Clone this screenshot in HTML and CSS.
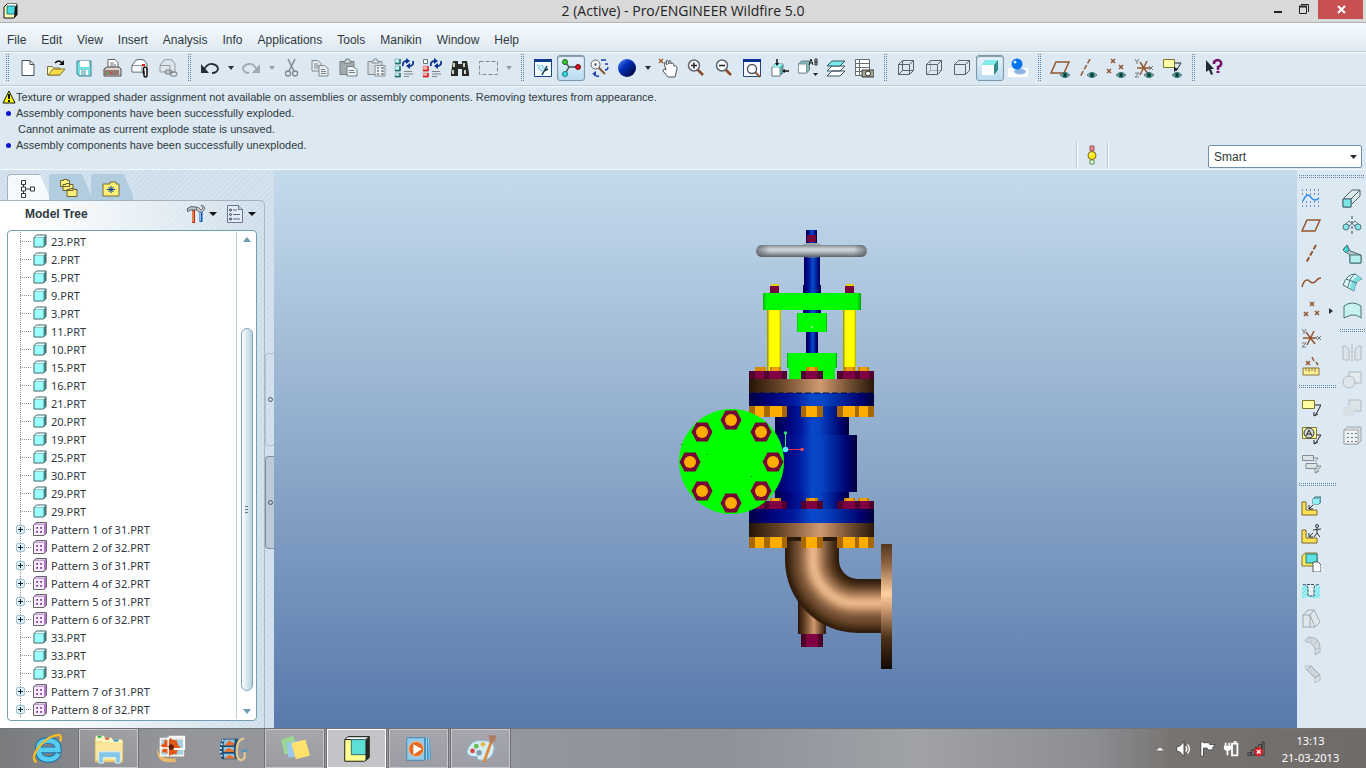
FILE: index.html
```html
<!DOCTYPE html>
<html lang="en">
<head>
<meta charset="utf-8">
<title>2 (Active) - Pro/ENGINEER Wildfire 5.0</title>
<link rel="stylesheet" href="styles.css">
</head>
<body>
<svg class="defs" aria-hidden="true">
  <defs>
    <symbol id="part" viewBox="0 0 14 14"><path d="M1 3.500 3.500 1H13v9.500L10.500 13H1z" fill="#458b8b" stroke="#3c5c60"/><path d="M1.500 3.500 3.500 1.500h9l-2 2z" fill="#e8ffff"/><path d="M1.500 4h9v8.500h-9z" fill="#9ff"/></symbol>
    <symbol id="pattern" viewBox="0 0 14 14"><path d="M.5 3 3 .5h10.500V11L11 13.500H.5z" fill="#b573c9" stroke="#666"/><path d="M1 3h10v10H1z" fill="#f8edff"/><path d="M1.500 2.500 3.500 1H13l-2 1.500z" fill="#dec3ea"/><path d="M3 5h2v2H3zM7 5h2v2H7zM3 9h2v2H3zM7 9h2v2H7z" fill="#a56cbd"/><path d="M4 5h1v1H4zM8 5h1v1H8zM4 9h1v1H4zM8 9h1v1H8z" fill="#6f2f8c"/></symbol>
    <symbol id="eye" viewBox="0 0 10 6"><path d="M0 3Q5-2 10 3 5 8 0 3z" fill="#9db9b9" stroke="#536d70"/><circle cx="5" cy="3" r="2.500" fill="#006b5b"/><circle cx="5" cy="3" r="1" fill="#012"/></symbol>
    <symbol id="lens" viewBox="0 0 20 20"><path d="m11 11 6 6" stroke="#8c4a22" stroke-width="2.500"/><circle cx="8" cy="7.500" r="5.500" fill="#f7fbff" stroke="#60666c" stroke-width="1.500"/></symbol>
    <symbol id="regen" viewBox="0 0 20 20"><path d="M9 8Q8 3 13 3M19 3q1 5-4 5" fill="none" stroke="#0a3292" stroke-width="1.800"/><path d="m12 0 4 3-4 3zM16 11l-4-3 4-3z" fill="#0a3292"/><path d="M10 13.500h8M10 16h9M10 18.500h5" stroke="#7f8789"/></symbol>
    <linearGradient id="orb" x1="0" x2="1" y2="1"><stop stop-color="#5b8eff"/><stop offset=".4" stop-color="#002db5"/><stop offset="1" stop-color="#000022"/></linearGradient>
  </defs>
</svg>

<header class="titlebar">
  <svg class="appicon" viewBox="0 0 16 16"><path d="M2 4 5 1h10v11l-3 3H2z" fill="#ffffb0" stroke="#111"/><path d="M5 1h10v11l-3 2z" fill="#fff"/><path d="M5 3h8v8H5z" fill="#48dce0" stroke="#26767c"/><path d="m13 4 2-3v11l-3 3z" fill="#111"/></svg>
  <h1 class="title">2 (Active) - Pro/ENGINEER Wildfire 5.0</h1>
  <div class="wincontrols">
    <button class="winbtn" aria-label="Minimize"><svg viewBox="0 0 20 20"><path d="M6 12h8" stroke="#222" stroke-width="2"/></svg></button>
    <button class="winbtn" aria-label="Restore"><svg viewBox="0 0 20 20"><path d="M5.500 6.500h7v7h-7zM7 4.500h7.500V12" fill="none" stroke="#222"/><path d="M5 6.500h8" stroke="#222" stroke-width="2"/></svg></button>
    <button class="winbtn close" aria-label="Close"><svg viewBox="0 0 20 20"><path d="m7 6 7 7m0-7-7 7" stroke="#fff" stroke-width="2"/></svg></button>
  </div>
</header>

<nav class="menubar">
  <button>File</button><button>Edit</button><button>View</button><button>Insert</button><button>Analysis</button><button>Info</button><button>Applications</button><button>Tools</button><button>Manikin</button><button>Window</button><button>Help</button>
</nav>

<div class="toolbar">
  <span class="grip"></span>
  <button class="tool" aria-label="New"><svg viewBox="0 0 20 20"><path d="M4 2.500h8l4 4v11H4z" fill="#fff" stroke="#4b5258"/><path d="M12 2.500v4h4" fill="none" stroke="#4b5258"/></svg></button>
  <button class="tool" aria-label="Open"><svg viewBox="0 0 20 20"><path d="M1.500 17V8.500h5l1 1.500h6v7z" fill="#fffdb4" stroke="#80713b"/><path d="m2 17 5-6h12l-5 6z" fill="#f7dc4c" stroke="#87732f"/><path d="M9 5q4-4 7 0" fill="none" stroke="#111" stroke-width="1.500"/><path d="M18 2v5h-5z" fill="#111"/></svg></button>
  <button class="tool" aria-label="Save"><svg viewBox="0 0 20 20"><path d="M3 3h14v15H5l-2-2z" fill="#72dfe3" stroke="#49818b"/><path d="M6 3h9v6H6zM6 12h8v5H6z" fill="#fff"/><path d="M7 12h5v5H7z" fill="#9cc9d4"/></svg></button>
  <button class="tool" aria-label="Print"><svg viewBox="0 0 20 20"><path d="M6 10V1.500h7l3 3V11" fill="#fff" stroke="#5b6265"/><path d="M8 5h4M8 7h6M8 9h6" stroke="#778"/><path d="m2 11 3-2h12l2 2v7H2z" fill="#ddd3ce" stroke="#434749"/><path d="M2 12h15v5H2z" fill="#95786f"/><path d="M4 15h3" stroke="#2c4"/><path d="M8 15h2" stroke="#f22"/></svg></button>
  <button class="tool" aria-label="Send"><svg viewBox="0 0 20 20"><path d="M2 7.500 6 2q4-1 8 0l3 4v8H2z" fill="#fff" stroke="#596167"/><path d="M2 7.500h10V14H2z" fill="#f5fafc" stroke="#88949b"/><path d="M12 6h3v2h-3z" fill="#e11"/><path d="M13.500 16v-5q0-2 1.500-2t2 2v6q0 2-1.500 2T14 17v-4" fill="#fff" stroke="#111" stroke-width="1.500"/></svg></button>
  <button class="tool" aria-label="Send as link"><svg viewBox="0 0 20 20"><path d="M2 7.500 6 2q4-1 8 0l3 4v8H2zM2 7.500h10V14" fill="#e0e7ec" stroke="#949ca4"/><rect x="7" y="12" width="7" height="4" rx="2" fill="none" stroke="#777"/><rect x="12" y="14" width="7" height="4" rx="2" fill="none" stroke="#777"/></svg></button>
  <span class="grip"></span>
  <button class="tool" aria-label="Undo"><svg viewBox="0 0 20 20"><path d="M4 12Q7 5.500 12 6q6 1 6 5-1 4-6 4" fill="none" stroke="#252e35" stroke-width="1.800"/><path d="M1 6v9h8z" fill="#252e35"/></svg></button>
  <button class="caret" aria-label="Undo list"></button>
  <button class="tool off" aria-label="Redo"><svg viewBox="0 0 20 20"><path d="M16 12Q13 5.500 8 6q-6 1-6 5 1 4 6 4" fill="none" stroke="#899198" stroke-width="1.800"/><path d="M19 6v9h-8z" fill="#899198"/></svg></button>
  <button class="caret off" aria-label="Redo list"></button>
  <button class="tool" aria-label="Cut"><svg viewBox="0 0 20 20"><path d="m6 1 6 12M13 1 7 13" stroke="#7f898f" stroke-width="1.500"/><circle cx="6" cy="15.500" r="2.500" fill="none" stroke="#7f898f" stroke-width="1.300"/><circle cx="13" cy="15.500" r="2.500" fill="none" stroke="#7f898f" stroke-width="1.300"/></svg></button>
  <button class="tool" aria-label="Copy"><svg viewBox="0 0 20 20"><g fill="#e5ecef" stroke="#7f888e"><path d="M2 2.500h6l3 3V13H2zM4 6h4m-4 2h5m-5 2h5"/><path d="M9 7.500h6l3 3V18H9zm2 4h4m-4 2h5m-5 2h5"/></g></svg></button>
  <button class="tool" aria-label="Paste"><svg viewBox="0 0 20 20"><path d="M2 3.500h14v13H2z" fill="#a2abaf" stroke="#747d82"/><path d="M6 5V3h2V1h3v2h2v2z" fill="#e3eaee" stroke="#747d82"/><path d="M9 8.500h6l4 3V18H9zm2 4h5m-5 2h6" fill="#edf2f5" stroke="#747d82"/></svg></button>
  <button class="tool" aria-label="Paste special"><svg viewBox="0 0 20 20"><path d="M2 3.500h14v13H2z" fill="#d4dce0" stroke="#858e94"/><path d="M6 5V3h2V1h3v2h2v2z" fill="#e3eaee" stroke="#858e94"/><path d="M9 7.500h10V18H9z" fill="#edf2f5" stroke="#858e94"/><path d="M11 10h2m2 0h3m-7 3h2m2 0h3m-7 3h2m2 0h3" stroke="#777f85" stroke-width="1.500"/></svg></button>
  <button class="tool" aria-label="Regenerate"><svg viewBox="0 0 20 20"><path d="M1 1h5v5H1zM1 8h5v5H1zM1 15h5v4H1z" fill="#bff2ed" stroke="#6fa3a3" stroke-width=".6"/><path d="M1 5.500h5V1M1 12.500h5V8M1 18.500h5V15" fill="none" stroke="#246b6c" stroke-width="1.500"/><use href="#regen"/></svg></button>
  <button class="tool" aria-label="Regenerate manager"><svg viewBox="0 0 20 20"><path d="M1.500 1.500h4v4h-4z" fill="#f2f7f7" stroke="#627b7f"/><path d="M1 8h5v5H1zM1 15h5v4H1z" fill="#ffb4aa" stroke="#c78" stroke-width=".6"/><path d="M1 12.500h5V8M1 18.500h5V15" fill="none" stroke="#d41f1f" stroke-width="1.500"/><use href="#regen"/></svg></button>
  <button class="tool" aria-label="Find"><svg viewBox="0 0 20 20"><path d="M3 3h5v3h4V3h5l2 12v3h-7v-7H8v7H1v-3z" fill="#282b28"/><path d="M4 5v4m-1 3v4M14 5v4m1 3v4" stroke="#d4d4bb" stroke-width="2"/></svg></button>
  <button class="tool" aria-label="Select box"><svg viewBox="0 0 20 20"><path d="M1.500 3.500h18v13h-18z" fill="none" stroke="#7e8990" stroke-dasharray="4 2"/></svg></button>
  <button class="caret off" aria-label="Selection options"></button>
  <span class="grip"></span>
  <button class="tool" aria-label="Repaint"><svg viewBox="0 0 20 20"><path d="M1.500 2.500h17v16h-17z" fill="#f8fdff" stroke="#174387"/><path d="M1 1h18v3H1z" fill="#123b8c"/><path d="m3 6 10 2 2 2-6 6z" fill="#c9eef6"/><path d="m4 7 3 2m2-2 2 3M5 10l4 3" stroke="#2593cf" stroke-dasharray="1"/><path d="m14 8-5 9m2-4 4-2" fill="none" stroke="#173b48" stroke-width="1.500"/></svg></button>
  <button class="tool pressed" aria-label="Spin centre"><svg viewBox="0 0 20 20"><path d="m4 4 4 5h9M8 9l-4 7" fill="none" stroke="#49545b" stroke-width="1.500"/><circle cx="4" cy="4" r="2.500" fill="#35d42a" stroke="#185b24"/><circle cx="17" cy="9" r="2.500" fill="#e00c19" stroke="#701018"/><circle cx="4" cy="16" r="2.500" fill="#2fe4e2" stroke="#1b7480"/></svg></button>
  <button class="tool" aria-label="Orient mode"><svg viewBox="0 0 20 20"><path d="m9 9 7 7" stroke="#8d532f" stroke-width="2"/><circle cx="6.500" cy="6.500" r="4.500" fill="#f4f8fa" stroke="#5d6469"/><path d="M5.500 6.500h2" stroke="#345" stroke-width="2"/><path d="M12 2h5m-1 4h3m0 3q0 3-3 3M5 16q1 3 5 2" fill="none" stroke="#183aaa" stroke-width="1.300"/><path d="m3 16 4-3v4z" fill="#183aaa"/></svg></button>
  <button class="tool" aria-label="Appearance gallery"><svg viewBox="0 0 20 20"><circle cx="10" cy="10" r="9" fill="url(#orb)"/></svg></button>
  <button class="caret" aria-label="Appearance list"></button>
  <button class="tool" aria-label="Pan"><svg viewBox="0 0 20 20"><path d="m1 1 4 4m0-4L1 5" stroke="#a25c34" stroke-width="1.500"/><path d="m8 12-2-7q1-2 3 2l-1-4q2-2 3 3V3q2-2 2 3l1-1q2 0 2 3 3-1 3 3l-2 8h-7l-5-6q0-3 3-1" fill="#fff" stroke="#4a5358"/></svg></button>
  <button class="tool" aria-label="Zoom in"><svg viewBox="0 0 20 20"><use href="#lens"/><path d="M5 7.500h6m-3-3v6" stroke="#222" stroke-width="1.500"/></svg></button>
  <button class="tool" aria-label="Zoom out"><svg viewBox="0 0 20 20"><use href="#lens"/><path d="M5 7.500h6" stroke="#222" stroke-width="1.500"/></svg></button>
  <button class="tool" aria-label="Refit"><svg viewBox="0 0 20 20"><path d="M1.500 2.500h17v16h-17z" fill="#f6fbff" stroke="#24477e"/><path d="M1 1h18v3H1z" fill="#0c3191"/><path d="m12 13 6 6" stroke="#925537" stroke-width="2"/><circle cx="10" cy="11" r="4.500" fill="#fff" stroke="#4e5a60" stroke-width="1.500"/></svg></button>
  <button class="tool" aria-label="Reorient"><svg viewBox="0 0 20 20"><path d="m2 9 3-3h8v9l-3 3H2z" fill="#4db5b2" stroke="#6b7a80"/><path d="M2 9h8v9H2z" fill="#fff" stroke="#81969b"/><path d="M2 9l3-3h8l-3 3z" fill="#8ff2f0"/><path d="M7 1v6M19 13h-6" stroke="#111" stroke-width="1.500"/><path d="m5 5 2 3 2-3zM15 11l-3 2 3 2z" fill="#111"/></svg></button>
  <button class="tool" aria-label="Saved views"><svg viewBox="0 0 20 20"><path d="m.5 6 3-3h8v9l-3 3h-8z" fill="#7ebac0" stroke="#6b7a80"/><path d="M.5 6h8v9h-8z" fill="#fff" stroke="#81969b"/><path d="m11 7 2-6 2 6m-3-2h3M17 1v6h2V4h-2 2V1z" fill="none" stroke="#222"/><path d="M15 15h5l-2.500 3z" fill="#222"/></svg></button>
  <button class="tool" aria-label="Layers"><svg viewBox="0 0 20 20"><g stroke="#3b5560"><path d="m1 18 5-5h13l-5 5zM1 13l5-5h13l-5 5z" fill="#fff"/><path d="m1 8 5-5h13l-5 5z" fill="#78e9ea"/></g></svg></button>
  <button class="tool" aria-label="View manager"><svg viewBox="0 0 20 20"><path d="M1.500 1.500h14v16h-14zM1 5.500h15M1 9.500h15M1 13.500h15M5.500 1v16" fill="#fff" stroke="#646d70"/><path d="M8 12h12v7H8z" fill="#aaa58f" stroke="#34383a"/><circle cx="14" cy="15.500" r="2.500" fill="#fff" stroke="#222"/></svg></button>
  <span class="grip"></span>
  <button class="tool" aria-label="Wireframe"><svg viewBox="0 0 20 20"><path d="m2.500 6.500 4-4h11v10l-4 4h-11zM2.500 6.500h11v10m0-10 4-4M6.500 2.500v10h11m-11 0-4 4" fill="none" stroke="#596267"/></svg></button>
  <button class="tool" aria-label="Hidden line"><svg viewBox="0 0 20 20"><path d="M6.500 2.500v10h11m-11 0-4 4" fill="none" stroke="#a5aeb3"/><path d="m2.500 6.500 4-4h11v10l-4 4h-11zM2.500 6.500h11v10m0-10 4-4" fill="none" stroke="#596267"/></svg></button>
  <button class="tool" aria-label="No hidden"><svg viewBox="0 0 20 20"><path d="m2.500 6.500 4-4h11v10l-4 4h-11zM2.500 6.500h11v10m0-10 4-4" fill="none" stroke="#596267"/></svg></button>
  <button class="tool pressed" aria-label="Shading"><svg viewBox="0 0 20 20"><path d="m2 7 4-5h12v10l-4 5H2z" fill="#338d8b"/><path d="m2 7 4-5h12l-4 5z" fill="#81edec"/><path d="M2 7h12v10H2z" fill="#fff"/></svg></button>
  <button class="tool" aria-label="Enhanced realism"><svg viewBox="0 0 20 20"><path d="M0 10h20v9H0z" fill="#fff"/><ellipse cx="12" cy="13.500" rx="6" ry="3" fill="#8bb6e4"/><circle cx="9" cy="6" r="5.500" fill="#0874ec"/><circle cx="7" cy="4" r="1.500" fill="#c8f3ff"/></svg></button>
  <span class="grip"></span>
  <button class="tool" aria-label="Plane display"><svg viewBox="0 0 20 20"><path d="M1 15 6 4h13l-5 11z" fill="none" stroke="#94552e" stroke-width="1.500"/><use href="#eye" x="10" y="14" width="10" height="6"/></svg></button>
  <button class="tool" aria-label="Axis display"><svg viewBox="0 0 20 20"><path d="M12 1 2 19" stroke="#94552e" stroke-width="1.500" stroke-dasharray="5 2"/><use href="#eye" x="9" y="14" width="10" height="6"/></svg></button>
  <button class="tool" aria-label="Point display"><svg viewBox="0 0 20 20"><path d="m5 1 4 4m0-4L5 5m8 2 4 4m0-4-4 4M1 11l4 4m0-4-4 4" stroke="#94552e" stroke-width="1.500"/><use href="#eye" x="10" y="14" width="10" height="6"/></svg></button>
  <button class="tool" aria-label="Coordinate display"><svg viewBox="0 0 20 20"><path d="M3 10h14M6 4l8 12M13 3 6 17" stroke="#94552e" stroke-width="1.500"/><path d="m1 1 2 3 2-3M3 4v2M1 15h4l-4 4h4M15 8l4 4m0-4-4 4" fill="none" stroke="#727c80"/><use href="#eye" x="10" y="14" width="10" height="6"/></svg></button>
  <button class="tool" aria-label="Annotation display"><svg viewBox="0 0 20 20"><path d="M1.500 1.500h11v8h-11z" fill="#ffffa8" stroke="#80752b"/><path d="M13 5h6l-5 8" fill="none" stroke="#222"/><path d="m12 9 4 2-4 3z" fill="#222"/><use href="#eye" x="10" y="14" width="10" height="6"/></svg></button>
  <span class="grip"></span>
  <button class="tool" aria-label="Context help"><svg viewBox="0 0 20 20"><path d="m2 2 8 9H7l2 5-2 1-2-5-3 2z" fill="#242b31"/><path d="M10 6V4q4-4 7 0 1 4-3 5v3" fill="none" stroke="#73106c" stroke-width="2.500"/><path d="M12.500 13h3v2h-3z" fill="#73106c"/></svg></button>
</div>

<section class="messages">
  <ul class="log">
    <li><svg class="warn" viewBox="0 0 14 14"><path d="m7 1 6 12H1z" fill="#ff0" stroke="#111" stroke-linejoin="round"/><path d="M7 4v5m0 1v2" stroke="#111" stroke-width="2"/></svg>Texture or wrapped shader assignment not available on assemblies or assembly components. Removing textures from appearance.</li>
    <li><i class="dot"></i>Assembly components have been successfully exploded.</li>
    <li class="sub">Cannot animate as current explode state is unsaved.</li>
    <li><i class="dot"></i>Assembly components have been successfully unexploded.</li>
  </ul>
  <div class="status">
    <span class="light"><svg viewBox="0 0 12 20"><path d="M4 1h4v5H4z" fill="#e5898c" stroke="#9a5759"/><path d="M4 15h4v4H4z" fill="#e7ffe7" stroke="#52914c"/><circle cx="6" cy="10.500" r="4" fill="#fee713" stroke="#7a6616"/><circle cx="5" cy="9" r="1" fill="#fff"/></svg></span>
    <select class="filter" aria-label="Selection filter"><option>Smart</option></select>
  </div>
</section>

<main class="workspace">
  <aside class="navigator">
    <div class="tabs">
      <button class="tab active" aria-label="Model Tree"><svg viewBox="0 0 20 20"><path d="M5.500 5v10m0-5h7" stroke="#333"/><path d="M3.500 1.500h4v4h-4zM3.500 8h4v4h-4zM3.500 14.500h4v4h-4zM12.500 8h4v4h-4z" fill="#fff" stroke="#333"/></svg></button>
      <button class="tab" aria-label="Folder Browser"><svg viewBox="0 0 20 20"><g fill="#f6ef7a" stroke="#6e6330"><path d="M1.500 2.500h3v-1h4v1h2v6h-9zM4 6.500h3v-1h4v1h3v6H4zM8 11.500h3v-1h4v1h3v7H8z"/></g></svg></button>
      <button class="tab" aria-label="Favorites"><svg viewBox="0 0 20 20"><path d="M2 6h7V4h6v2h3v12H2z" fill="#fff27a" stroke="#786d35"/><path d="M10 8v7m-4-3.500h8M7.500 9l5 5m0-5-5 5" stroke="#073b91"/></svg></button>
    </div>
    <div class="panel">
      <div class="panelhead">
        <h2>Model Tree</h2>
        <button class="headtool" aria-label="Settings"><svg viewBox="0 0 20 20"><path d="M7.500 6v13" stroke="#c52a13" stroke-width="3"/><path d="M7 7v11" stroke="#ffd07c"/><path d="M1 5q4-4 8-2h2v3H4L2 8z" fill="#b9c3c8" stroke="#5b676d"/><path d="M15 8v10" stroke="#1257bd" stroke-width="3"/><path d="M14.500 8v9" stroke="#8dbcf5"/><path d="m12 3 3 3 2-2-2-3q4 1 4 4l-3 3h-3l-3-3z" fill="#c2c8cc" stroke="#6f7579"/></svg><i></i></button>
        <button class="headtool" aria-label="Show"><svg viewBox="0 0 20 20"><path d="M2.500 1.500h11l4 4v13h-15z" fill="#e1ecf8" stroke="#6a7889"/><path d="M13.500 1.500v4h4" fill="#b8d1ed" stroke="#6a7889"/><path d="M8 6h4m-4 4.500h7M8 15h7" stroke="#567"/><circle cx="5.500" cy="6" r="1" fill="none" stroke="#334"/><circle cx="5.500" cy="10.500" r="1" fill="none" stroke="#334"/><circle cx="5.500" cy="15" r="1" fill="none" stroke="#334"/></svg><i></i></button>
      </div>
      <div class="treebox">
        <ul class="tree">
          <li><svg><use href="#part"/></svg>23.PRT</li>
          <li><svg><use href="#part"/></svg>2.PRT</li>
          <li><svg><use href="#part"/></svg>5.PRT</li>
          <li><svg><use href="#part"/></svg>9.PRT</li>
          <li><svg><use href="#part"/></svg>3.PRT</li>
          <li><svg><use href="#part"/></svg>11.PRT</li>
          <li><svg><use href="#part"/></svg>10.PRT</li>
          <li><svg><use href="#part"/></svg>15.PRT</li>
          <li><svg><use href="#part"/></svg>16.PRT</li>
          <li><svg><use href="#part"/></svg>21.PRT</li>
          <li><svg><use href="#part"/></svg>20.PRT</li>
          <li><svg><use href="#part"/></svg>19.PRT</li>
          <li><svg><use href="#part"/></svg>25.PRT</li>
          <li><svg><use href="#part"/></svg>30.PRT</li>
          <li><svg><use href="#part"/></svg>29.PRT</li>
          <li><svg><use href="#part"/></svg>29.PRT</li>
          <li><button aria-label="Expand"></button><svg><use href="#pattern"/></svg>Pattern 1 of 31.PRT</li>
          <li><button aria-label="Expand"></button><svg><use href="#pattern"/></svg>Pattern 2 of 32.PRT</li>
          <li><button aria-label="Expand"></button><svg><use href="#pattern"/></svg>Pattern 3 of 31.PRT</li>
          <li><button aria-label="Expand"></button><svg><use href="#pattern"/></svg>Pattern 4 of 32.PRT</li>
          <li><button aria-label="Expand"></button><svg><use href="#pattern"/></svg>Pattern 5 of 31.PRT</li>
          <li><button aria-label="Expand"></button><svg><use href="#pattern"/></svg>Pattern 6 of 32.PRT</li>
          <li><svg><use href="#part"/></svg>33.PRT</li>
          <li><svg><use href="#part"/></svg>33.PRT</li>
          <li><svg><use href="#part"/></svg>33.PRT</li>
          <li><button aria-label="Expand"></button><svg><use href="#pattern"/></svg>Pattern 7 of 31.PRT</li>
          <li><button aria-label="Expand"></button><svg><use href="#pattern"/></svg>Pattern 8 of 32.PRT</li>
        </ul>
        <div class="scrollbar"><span class="up"></span><span class="track"><span class="thumb"></span></span><span class="down"></span></div>
      </div>
    </div>
    <div class="sashes"><span class="sash"></span><span class="sash dark"></span></div>
  </aside>

  <section class="viewport">
    <svg class="model" viewBox="274 170 1023 558" role="img" aria-label="Valve assembly">
      <defs>
        <linearGradient id="blue"><stop stop-color="#000045"/><stop offset=".15" stop-color="#000075"/><stop offset=".35" stop-color="#00189b"/><stop offset=".5" stop-color="#0848ca"/><stop offset=".6" stop-color="#0744c4"/><stop offset=".75" stop-color="#002399"/><stop offset=".9" stop-color="#00006d"/><stop offset="1" stop-color="#000038"/></linearGradient>
        <linearGradient id="brown"><stop stop-color="#251407"/><stop offset=".25" stop-color="#694528"/><stop offset=".57" stop-color="#d09a70"/><stop offset=".8" stop-color="#755033"/><stop offset="1" stop-color="#28170a"/></linearGradient>
        <linearGradient id="brownv" x2="0" y2="1"><stop stop-color="#52371e"/><stop offset=".15" stop-color="#8b603f"/><stop offset=".4" stop-color="#ffd0a0"/><stop offset=".5" stop-color="#d9a57a"/><stop offset=".75" stop-color="#4c3019"/><stop offset="1" stop-color="#120a03"/></linearGradient>
        <linearGradient id="wheel" x2="0" y2="1"><stop stop-color="#808990"/><stop offset=".35" stop-color="#d3d8db"/><stop offset=".6" stop-color="#b4bbc0"/><stop offset="1" stop-color="#5b6268"/></linearGradient>
        <linearGradient id="wheelends"><stop stop-color="#4c545a" stop-opacity=".7"/><stop offset=".12" stop-color="#4c545a" stop-opacity="0"/><stop offset=".88" stop-color="#4c545a" stop-opacity="0"/><stop offset="1" stop-color="#4c545a" stop-opacity=".7"/></linearGradient>
        <linearGradient id="green"><stop stop-color="#00b800"/><stop offset=".04" stop-color="#00fa00"/><stop offset=".5" stop-color="#00ff00"/><stop offset=".96" stop-color="#00f800"/><stop offset="1" stop-color="#00a500"/></linearGradient>
        <linearGradient id="yellow"><stop stop-color="#8b8b00"/><stop offset=".2" stop-color="#ff0"/><stop offset=".85" stop-color="#ff0"/><stop offset="1" stop-color="#a3a300"/></linearGradient>
        <filter id="soften" filterUnits="userSpaceOnUse" x="760" y="500" width="150" height="160"><feGaussianBlur stdDeviation="2"/></filter>
        <clipPath id="pipe"><path d="M785 541V560A73 73 0 0 0 858 633H881V579H858A19 19 0 0 1 839 560V541z"/></clipPath>
        <path id="elbow" d="M812 531V560A46 46 0 0 0 858 606H891" fill="none"/>
        <path id="elbowlit" d="M813 531V560A43 43 0 0 0 856 603H891" fill="none"/>
        <g id="hex"><path d="m-10.500 0 5-9.500H5.500l5 9.500-5 9.500H-5.500z" fill="#760335"/><circle r="6" fill="#ffac00"/></g>
        <g id="nubs"><path d="M770 0h11v4h-11zM806 0h12v4h-12zM844 0h11v4h-11zM858 0h11v4h-11z" fill="#c77d00"/><path d="M772 0h7v4h-7zM809 0h6v4h-6zM846 0h7v4h-7zM860 0h7v4h-7z" fill="#ee9d0c"/></g>
        <g id="heads"><path d="M749 0h38v8h-38zM801 0h22v8h-22zM837 0h37v8h-37z" fill="#50002c"/><path d="M755 0h9v8h-9zM769 0h13v8h-13zM806 0h11v8h-11zM843 0h12v8h-12zM860 0h9v8h-9z" fill="#800044"/></g>
        <g id="nuts"><path d="M749 0h38v11h-38zM801 0h22v11h-22zM837 0h37v11h-37z" fill="#a86800"/><path d="M755 0h9v11h-9zM770 0h12v11h-12zM806 0h11v11h-11zM843 0h12v11h-12zM859 0h9v11h-9z" fill="#ffac00"/></g>
      </defs>
      <path d="M806 230h11v13h-11z" fill="url(#blue)"/><path d="M807 235h9v7h-9z" fill="#73063b"/>
      <path d="M804 257h16v28h1v28h-18v-28h1z" fill="url(#blue)"/>
      <path d="M801 246q3-3 8-3h5q6 0 9 3v10q-11 3-22 0z" fill="#98a2aa"/>
      <rect x="756" y="245" width="111" height="12" rx="6" fill="url(#wheel)"/><rect x="756" y="245" width="111" height="12" rx="6" fill="url(#wheelends)"/>
      <path d="M771 284h8v3h-8zM846 284h8v3h-8z" fill="#e5cf00"/><path d="M770 286h9v7h-9zM845 286h9v7h-9z" fill="#76063b"/>
      <path d="M767 310h14v61h-14z" fill="url(#yellow)"/><path d="M843 310h13v61h-13z" fill="url(#yellow)"/>
      <path d="M806 332h12v22h-12z" fill="url(#blue)"/>
      <path d="M763 293h98v17h-98z" fill="url(#green)"/><path d="M797 313h30v19h-30z" fill="url(#green)"/><path d="M787 353h50v15h-2v11h-46v-11h-2z" fill="url(#green)"/><circle cx="812" cy="327" r="1" fill="#aaff9a"/>
      <use href="#nubs" y="367"/><path d="M755 367h11v4h-11z" fill="#d98a00"/><use href="#heads" y="371"/>
      <path d="M749 379h125v14H749z" fill="url(#brown)"/><path d="M775 406h74v103h-74z" fill="url(#blue)"/><path d="M767 435h90v57h-90z" fill="url(#blue)"/>
      <path d="M749 393h125v13H749z" fill="url(#blue)"/><path d="M751 393h121" stroke="#00104c" stroke-dasharray="6 3"/><use href="#nuts" y="406"/>
      <use href="#nubs" y="498"/><use href="#heads" y="501"/>
      <path d="M749 509h125v14H749z" fill="url(#blue)"/><path d="M749 523h125v14H749z" fill="url(#brown)"/>
      <path d="M798 594h28v40h-28z" fill="url(#brown)"/><path d="M801 634h22v13h-22z" fill="#4a0025"/><path d="M806 634h12v13h-12z" fill="#800044"/>
      <g clip-path="url(#pipe)"><g filter="url(#soften)"><use href="#elbow" stroke="#2a190b" stroke-width="62"/><use href="#elbow" stroke="#39230f" stroke-width="50"/><use href="#elbow" stroke="#4c3018" stroke-width="45"/><use href="#elbow" stroke="#5f3f25" stroke-width="39"/><use href="#elbow" stroke="#734e31" stroke-width="33"/><use href="#elbowlit" stroke="#87603f" stroke-width="27"/><use href="#elbowlit" stroke="#9b704d" stroke-width="22"/><use href="#elbowlit" stroke="#b4845d" stroke-width="17"/><use href="#elbowlit" stroke="#ce9b70" stroke-width="12"/><use href="#elbowlit" stroke="#eab88b" stroke-width="7"/></g></g>
      <path d="M787 537h50v4h-50z" fill="#2a190c"/><use href="#nuts" y="537"/>
      <path d="M881 544h11v125h-11z" fill="url(#brownv)"/>
      <circle cx="731.500" cy="461.500" r="52.500" fill="#00ff00"/>
      <path d="M707 454h1v1h-1zM751 476h1v1h-1zM681 444h1v1h-1z" fill="#006b00"/>
      <use href="#hex" x="731" y="420"/><use href="#hex" x="761" y="432"/><use href="#hex" x="773" y="462"/><use href="#hex" x="761" y="491"/><use href="#hex" x="731" y="503"/><use href="#hex" x="702" y="491"/><use href="#hex" x="690" y="462"/><use href="#hex" x="702" y="432"/>
      <path d="M785.500 449v-16" stroke="#36dd66"/><path d="M786 449.500h16" stroke="#e12e4d"/><circle cx="785.500" cy="433" r="1.800" fill="#36dd66"/><circle cx="802" cy="449.500" r="1.800" fill="#e94556"/><circle cx="785.500" cy="449.500" r="2.800" fill="#5ee9ff"/>
    </svg>
  </section>

  <aside class="features">
    <span class="hgrip top"></span>
    <div class="fcol">
      <button class="ftool" aria-label="Sketch"><svg viewBox="0 0 20 20"><path d="M1 2h18M1 6h18M1 14h18M1 18h18" stroke="#173d9e" stroke-dasharray="1 3"/><path d="M2 13q3-8 7-5 4 7 9 2" fill="none" stroke="#2485e8" stroke-width="1.500"/></svg></button>
      <button class="ftool" aria-label="Plane"><svg viewBox="0 0 20 20"><path d="M1 15 6 4h13l-5 11z" fill="none" stroke="#94552e" stroke-width="1.500"/></svg></button>
      <button class="ftool" aria-label="Axis"><svg viewBox="0 0 20 20"><path d="M15 1 5 19" stroke="#94552e" stroke-width="2" stroke-dasharray="5 2"/></svg></button>
      <button class="ftool" aria-label="Curve"><svg viewBox="0 0 20 20"><path d="M1 15q2-8 6-7 5 5 8 1 2-3 5-3" fill="none" stroke="#94552e" stroke-width="1.500"/></svg></button>
      <button class="ftool" aria-label="Point"><svg viewBox="0 0 20 20"><path d="m9 2 4 4m0-4L9 6m5 5 4 4m0-4-4 4M3 12l4 4m0-4-4 4" stroke="#94552e" stroke-width="1.500"/></svg></button>
      <button class="ftool" aria-label="Coordinate system"><svg viewBox="0 0 20 20"><path d="M2 10h14M5 4l9 12M13 3 6 17" stroke="#94552e" stroke-width="1.500"/><path d="m1 1 2 3 2-3M3 4v2M1 15h4l-4 4h4M16 8l4 4m0-4-4 4" fill="none" stroke="#727c80"/></svg></button>
      <button class="ftool" aria-label="Analysis feature"><svg viewBox="0 0 20 20"><path d="m5 5 4 4m0-4L5 9M11 1l2 4m2 1 2 3" stroke="#94552e" stroke-width="1.500"/><path d="M2 12h16v7H2z" fill="#fff093" stroke="#857336"/><path d="M5 12v3m3-3v4m3-4v3m3-3v4" stroke="#857336"/></svg></button>
      <span class="hgrip"></span>
      <button class="ftool" aria-label="Annotation"><svg viewBox="0 0 20 20"><path d="M1.500 2.500h12v8h-12z" fill="#ffffa0" stroke="#80752b"/><path d="M14 7h6l-6 11m-1-4v4l4-2" fill="none" stroke="#222"/></svg></button>
      <button class="ftool" aria-label="Annotation feature"><svg viewBox="0 0 20 20"><path d="M1.500 1.500h14v11h-14z" fill="#ffffa0" stroke="#80752b"/><circle cx="8" cy="7" r="5" fill="#d5d9d7" stroke="#333"/><path d="m5 10 3-6 3 6m-5-2h4M16 9h4l-6 9m-1-4v4l4-2" fill="none" stroke="#222"/></svg></button>
      <button class="ftool" aria-label="Annotation propagate"><svg viewBox="0 0 20 20"><path d="M1.500 1.500h11v5h-11zM5 9.500h11v5H5z" fill="#dde4e7" stroke="#858e94"/><path d="M13 4h4l-3 4m2 4h4l-5 7m-1-4v4l4-2" fill="none" stroke="#858e94"/></svg></button>
      <span class="hgrip"></span>
      <button class="ftool" aria-label="Assemble"><svg viewBox="0 0 20 20"><path d="M1 18V6h4v8h11v5H1z" fill="#ffe252" stroke="#7f642b"/><path d="m12 3 2-2h6v5l-2 2h-6z" fill="#75c5cc" stroke="#456c73"/><path d="M12 3h6v5h-6z" fill="#8df2f4"/><path d="m12 9-4 4m0-4v4h4" fill="none" stroke="#222"/></svg></button>
      <button class="ftool" aria-label="Manikin"><svg viewBox="0 0 20 20"><path d="M1 18V6h4v8h11v5H1z" fill="#ffe252" stroke="#7f642b"/><circle cx="16" cy="2" r="1.500" fill="none" stroke="#333"/><path d="m12 6 8-1m-4-1v5l-3 4m3-4 3 4M12 9l-4 4m0-4v4h4" fill="none" stroke="#333"/></svg></button>
      <button class="ftool" aria-label="Create component"><svg viewBox="0 0 20 20"><path d="m1 4 3-3h12v13H1z" fill="#ffeb59" stroke="#83723c"/><path d="M5 2h11v9H5z" fill="#5fe3e4" stroke="#22787e"/><path d="M12 10h5l3 3v7h-8z" fill="#fff" stroke="#4f575b"/></svg></button>
      <button class="ftool" aria-label="Hole"><svg viewBox="0 0 20 20"><path d="M1 5h18v13H1z" fill="#a5f0f3"/><path d="m1 10 4-4M1 14l6-6M1 18l7-7M12 18l7-7M12 14l7-7M15 18l4-4" stroke="#5ce2e7"/><path d="M2 4.500q5 0 5 4V16h6V8.500q0-4 5-4" fill="#e4f0f6"/><path d="M2 4.500q5 0 5 4V16h6V8.500q0-4 5-4M6 4.500h8" fill="none" stroke="#394b57" stroke-dasharray="3 1"/></svg></button>
      <button class="ftool off" aria-label="Rib"><svg viewBox="0 0 20 20"><path d="m2 7 5-5h6l6 12-5 5H2zM2 7h7v12M9 7l4-5m1 17L9 7" fill="#e3e7ea" stroke="#858e94"/></svg></button>
      <button class="ftool off" aria-label="Round"><svg viewBox="0 0 20 20"><path d="M4 5 7 1q12 0 12 11v4l-5 3q2-12-10-14z" fill="#d0d6da" stroke="#949ca2"/><path d="m7 1 4 5m5-3-2 5m5 4-5 1" stroke="#a9b0b5"/></svg></button>
      <button class="ftool off" aria-label="Chamfer"><svg viewBox="0 0 20 20"><path d="M4 2h6l9 9v5l-5 3v-6L5 5z" fill="#dce1e4" stroke="#a9b0b5"/><path d="m6 6 4-4 9 9-5 3z" fill="#c7cdd1" stroke="#858e94"/></svg></button>
    </div>
    <span class="flyout"></span>
    <div class="fcol second">
      <button class="ftool" aria-label="Extrude"><svg viewBox="0 0 20 20"><path d="m1 11 9-9h8v6l-8 8m-9-5h8v8H1zm8 0 9-9" fill="#dcebec" stroke="#4c5f67"/><path d="M1 11h8v8H1z" fill="#7de7e8" stroke="#43666e"/></svg></button>
      <button class="ftool" aria-label="Revolve"><svg viewBox="0 0 20 20"><path d="M10 0v20" stroke="#304650" stroke-dasharray="3 2"/><circle cx="4" cy="11" r="3" fill="#82e7e7" stroke="#54727b"/><circle cx="16" cy="11" r="3" fill="#82e7e7" stroke="#54727b"/><path d="m4 8 3-3 6 5m3-2-3-3-6 5" fill="none" stroke="#54727b"/></svg></button>
      <button class="ftool" aria-label="Sweep"><svg viewBox="0 0 20 20"><path d="m1 6 4-5 3 6 11 4v8H8V11z" fill="#bcc8ce" stroke="#49656c"/><path d="M8 11h11v8H8z" fill="#b6f0ee" stroke="#467175"/><path d="m1 6 4-5 2 5-3 3z" fill="#42ddd8" stroke="#467175"/></svg></button>
      <button class="ftool" aria-label="Blend"><svg viewBox="0 0 20 20"><path d="M1 13Q5 2 13 2l7 5q-7 1-8 12z" fill="#dcf8f8" stroke="#4e7179"/><path d="M8 16Q10 6 16 4l4 3q-7 1-8 12z" fill="#78dfe0"/><path d="m4 7 11 4M13 2q-5 3-7 13" fill="none" stroke="#4e7179"/></svg></button>
      <button class="ftool" aria-label="Style"><svg viewBox="0 0 20 20"><path d="M2 6q8-6 17 0v12q-4-4-10-3l-7 3z" fill="#c5f2f1" stroke="#4e7179"/></svg></button>
      <span class="hgrip"></span>
      <button class="ftool off" aria-label="Mirror"><svg viewBox="0 0 20 20"><path d="M10 1v19M1 4q6 0 6 6v8H1zm18 0q-6 0-6 6v8h6z" fill="#dee3e7" stroke="#9ca4a9"/></svg></button>
      <button class="ftool off" aria-label="Merge"><svg viewBox="0 0 20 20"><path d="M7 2h12v11H7z" fill="#e7edef" stroke="#9ca4a9"/><circle cx="7" cy="12" r="6" fill="#e0e6ea" stroke="#9ca4a9"/></svg></button>
      <button class="ftool off" aria-label="Trim"><svg viewBox="0 0 20 20"><path d="M7 2h12v11H7z" fill="#dce2e5" stroke="#9ca4a9"/><circle cx="7" cy="13" r="6" fill="#d3dbe0"/></svg></button>
      <button class="ftool" aria-label="Pattern"><svg viewBox="0 0 20 20"><path d="m2 4 3-3h14v14l-3 3H2z" fill="#d4dbdf" stroke="#a2aaaf"/><path d="M2 4h14v14H2z" fill="#edf2f4" stroke="#a2aaaf"/><path d="M5 7.500h10M5 11.500h10M5 15.500h10" stroke="#6f7a80" stroke-dasharray="2"/></svg></button>
    </div>
  </aside>
</main>

<footer class="taskbar">
  <div class="apps">
    <button class="app plain" aria-label="Internet Explorer"><svg viewBox="0 0 34 34"><path d="M10 18h19Q29 8 18 8T8 18q0 10 11 10 7 0 10-6" fill="none" stroke="#126fa9" stroke-width="7"/><path d="M10 18h19Q29 8 18 8T8 18q0 10 11 10 7 0 10-6" fill="none" stroke="#58cdf2" stroke-width="5"/><path d="M6 31Q-1 27 9 14 20 2 30 2q3 1 1 7" fill="none" stroke="#f4bd26" stroke-width="2.500"/></svg></button>
    <button class="app" aria-label="File Explorer"><svg viewBox="0 0 34 34"><path d="M2 5h10l3 3h17v23H2z" fill="#e7c56b"/><path d="M3 3h9v6H3zM10 5h10v5H10zM19 7h12v5H19z" fill="#fff7c3"/><path d="M5 3h4v2H5z" fill="#1caf59"/><path d="M13 5h4v2h-4z" fill="#e84c28"/><path d="M22 7h5v2h-5z" fill="#258bc5"/><path d="M3 10h28v19H3z" fill="#fbe69a"/><path d="M6 32V20h23v12h-5v-6H11v6z" fill="#83c6e8" stroke="#daf1fa"/></svg></button>
    <button class="app plain" aria-label="Photo Gallery"><svg viewBox="0 0 34 34"><path d="M2 17q0 14 12 14h8v-4h-7q-9 0-13-10z" fill="#eab96b"/><path d="M5 5h26v20H5z" fill="#f3f1e8"/><path d="M7 7h23v16H7z" fill="#a5cfe2"/><circle cx="17" cy="15" r="8" fill="#dc4813"/><path d="m17 5 2 4 4-2v5l4 3-4 3v5l-5-2-3 4-3-5-5 1 2-5-3-3 4-2v-4l4 1z" fill="#e35a18"/><circle cx="17" cy="15" r="3" fill="#65200c"/><path d="M14 4v10M5 16h9v9" fill="none" stroke="#fff" stroke-width="1.500"/><path d="M15 4h16v13H20" fill="none" stroke="#fff" stroke-width="2"/></svg></button>
    <button class="app plain" aria-label="Movie Maker"><svg viewBox="0 0 34 34"><path d="M5 6h18q-4 11 0 22H5Q1 17 5 6z" fill="#214c72"/><path d="M8 7h11l-1 6H7zM7 15h11v5H7zM7 22h11l1 5H8z" fill="#8fc6df"/><path d="m8 13 5-5 5 3v2zM7 20l5-4 6 2v2zM8 27l5-4 6 3v1z" fill="#ef6b25"/><path d="M5 8h2m-3 4h2m-3 4h2m-2 4h2m-1 4h2" stroke="#c8e7f5" stroke-width="2"/><path d="M29 6q-8 0-8 14 0 9 5 9 5-2 3-9" fill="none" stroke="#e2c58f" stroke-width="2.500"/><path d="m26 20 6-2" stroke="#4a93bd" stroke-width="2.500"/></svg></button>
    <button class="app" aria-label="Sticky Notes"><svg viewBox="0 0 34 34"><path d="m2 7 13-4 6 15-15 5z" fill="#99d792"/><path d="m8 10 15-2 3 17-16 1z" fill="#9ac8ed"/><path d="m13 11 15-4 5 17-15 4z" fill="#ffe16c"/></svg></button>
    <button class="app current" aria-label="Pro/ENGINEER"><svg viewBox="0 0 34 34"><path d="m4 8 4-4h22v22l-5 4H4z" fill="#fffe91" stroke="#111"/><path d="m4 7 3-3h23l-4 3z" fill="#fff" stroke="#111"/><path d="M11 7h16v16H11z" fill="#5dded6" stroke="#2c6669"/><path d="m26 8 4-4v22l-4 4z" fill="#252721"/></svg></button>
    <button class="app" aria-label="Media Player"><svg viewBox="0 0 34 34"><path d="M7 5h21l2 23H9z" fill="#4596c5"/><path d="M25 5v23m2-23 1 23" stroke="#a8d6ef"/><path d="M4 5h19v24H4z" fill="#92cbea" stroke="#4188b0"/><circle cx="14" cy="17" r="8" fill="#e36a25" stroke="#fac088"/><path d="m11 12 9 5-9 6z" fill="#fff"/></svg></button>
    <button class="app" aria-label="Paint"><svg viewBox="0 0 34 34"><path d="M2 20Q5 7 18 8q13 0 13 8-1 13-14 13-5 0-4-4-10 1-11-5z" fill="#d4ecf6" stroke="#8eb8d1"/><circle cx="8" cy="19" r="2.500" fill="#d74b45"/><circle cx="12" cy="14" r="2.500" fill="#65bb53"/><circle cx="19" cy="12" r="2.500" fill="#e2b947"/><circle cx="15" cy="21" r="3" fill="#85a1b0"/><path d="M20 31 28 9" stroke="#dc8c3d" stroke-width="3"/><path d="m25 2 8 1-1 5-5 3z" fill="#b07a5c"/></svg></button>
  </div>
  <div class="tray">
    <button aria-label="Show hidden icons"><svg viewBox="0 0 20 20"><path d="m5 12 5-4 5 4z" fill="#fff" stroke="#555" stroke-width=".5"/></svg></button>
    <button aria-label="Volume"><svg viewBox="0 0 20 20"><path d="M2 7h3l5-5v16l-5-5H2z" fill="#fff" stroke="#444"/><path d="M12 7q2 3 0 6m2-8q4 5 0 10" fill="none" stroke="#fff" stroke-width="1.500"/></svg></button>
    <button aria-label="Action Center"><svg viewBox="0 0 20 20"><path d="M2 2h3v1h6l1 2h6l-3 4 1 2h-6l-1-2H5v9H2z" fill="#fff" stroke="#444"/></svg></button>
    <button aria-label="Battery"><svg viewBox="0 0 20 20"><path d="M10 4h6v13h-6z" fill="#777" stroke="#fff" stroke-width="2"/><path d="M12 2h3M3 3v3m4-3v3M5 10v7" stroke="#fff" stroke-width="2"/><path d="M1 6h8v4l-2 2H3l-2-2z" fill="#fff"/></svg></button>
    <button aria-label="Network"><svg viewBox="0 0 20 20"><path d="M1 14h3v3H1zM5 11h3v6H5zM9 8h3v9H9zM13 5h3v12h-3zM17 2h2v15h-2z" fill="#777" stroke="#333"/><circle cx="13" cy="13" r="5" fill="#d82129"/><path d="m11 11 4 4m0-4-4 4" stroke="#fff" stroke-width="1.500"/></svg></button>
    <time class="clock">13:13<br>21-03-2013</time>
  </div>
</footer>
</body>
</html>
```
FILE: styles.css
```css
* { box-sizing: border-box; }
body {
  margin: 0;
  min-height: 100vh;
  display: flex;
  flex-direction: column;
  overflow: hidden;
  background: #dce9f2;
  color: #303840;
  font-family: "Liberation Sans", Arial, sans-serif;
  font-size: 12px;
}
button { padding: 0; border: 0; background: none; color: inherit; font: inherit; }
ul, h1, h2 { margin: 0; padding: 0; list-style: none; font-weight: normal; }
svg { display: block; }
.defs { position: absolute; width: 0; height: 0; }

.titlebar {
  display: grid;
  grid-template-columns: 1fr auto 1fr;
  align-items: center;
  height: 23px;
  background: #d9d9d9;
  border-bottom: 1px solid #b1b5b9;
}
.appicon { width: 16px; height: 16px; margin-left: 2px; }
.title { font-family: "Open Sans", sans-serif; font-size: 14px; line-height: 22px; color: #222; }
.wincontrols { display: flex; justify-content: flex-end; align-self: start; padding-right: 3px; }
.winbtn { width: 26px; height: 19px; display: grid; place-items: center; }
.winbtn svg { width: 20px; height: 20px; }
.winbtn.close { width: 45px; margin-left: 1px; background: #c75050; }

.menubar {
  display: flex;
  align-items: center;
  gap: 15px;
  height: 28px;
  padding: 6px 7px 0;
  background: linear-gradient(#f6fbff, #dfe9f1);
}
.menubar button { line-height: 20px; font-size: 12px; }

.toolbar {
  display: flex;
  align-items: center;
  height: 35px;
  padding-bottom: 2px;
  border-top: 1px solid #bccdd8;
  border-bottom: 1px solid #bccdd8;
  box-shadow: inset 0 1px #f4faff, 0 1px #f4faff;
}
.grip { flex: none; width: 14px; height: 28px; display: grid; justify-content: center; }
.grip::before { content: ""; width: 4px; background: conic-gradient(#6286a8 25%, transparent 0) 0 0 / 2px 2px; }
.tool { flex: none; width: 28px; height: 26px; display: grid; place-items: center; }
.tool svg { width: 20px; height: 20px; }
.tool.pressed { border: 1px solid #7d96a8; border-radius: 3px; background: linear-gradient(#e8f4fb, #b9daef); box-shadow: inset 0 1px 1px #7d96a8; }
.caret { flex: none; width: 13px; height: 26px; display: grid; place-items: center; }
.caret::before { content: ""; border: 3px solid transparent; border-top: 4px solid #28313a; border-bottom: 0; }
.off { opacity: .7; }
.caret.off { opacity: .4; }

.messages { display: flex; justify-content: space-between; height: 84px; padding: 3px 4px 1px 2px; border-bottom: 1px solid #f1f8fc; }
.log { font-size: 11px; line-height: 16px; }
.log li { display: flex; align-items: center; height: 16px; white-space: nowrap; }
.log .sub { padding-left: 16px; }
.warn { width: 14px; height: 14px; }
.dot { width: 5px; height: 5px; margin: 0 5px 0 4px; border-radius: 50%; background: #0a12d6; }
.status { display: flex; align-items: flex-end; align-self: flex-end; gap: 100px; }
.light { width: 32px; height: 26px; display: grid; place-items: center; border: solid #b9c8d2; border-width: 0 1px; box-shadow: inset 1px 0 #fff, 1px 0 #fff; }
.light svg { width: 12px; height: 20px; }
.filter {
  appearance: none;
  width: 154px;
  height: 23px;
  padding: 0 5px;
  border: 1px solid #6e91ad;
  border-radius: 2px;
  color: #303840;
  font: 12px "Liberation Sans", Arial, sans-serif;
  background: #fff url("data:image/svg+xml,%3Csvg xmlns='http://www.w3.org/2000/svg' width='7' height='4'%3E%3Cpath d='M0 0h7L3.500 4z' fill='%2328313a'/%3E%3C/svg%3E") no-repeat right 4px center;
}

.workspace { flex: 1; display: flex; min-height: 0; }
.navigator {
  flex: none;
  width: 274px;
  display: grid;
  grid-template: 30px 1fr / 265px 9px;
  background: repeating-linear-gradient(135deg, #d5e3ee 0 2px, #cddde9 2px 4px);
}
.tabs { grid-column: 1 / 3; display: flex; align-items: flex-end; padding-left: 7px; }
.tab { width: 42px; height: 26px; padding: 2px 0 0 10px; border-radius: 4px 0 0 0; background: #b2cde0; clip-path: polygon(0 0, 78% 0, 100% 82%, 100% 100%, 0 100%); }
.tab.active { background: #f5fafd; border: solid #a2b3bf; border-width: 1px 0 0 1px; }
.tab svg { width: 20px; height: 20px; }
.panel {
  display: flex;
  flex-direction: column;
  padding: 0 7px 7px;
  border-top: 1px solid #a2b3bf;
  border-right: 1px solid #a9bac6;
  border-radius: 0 5px 0 0;
  background: linear-gradient(90deg, #fff 10%, transparent);
}
.panelhead { flex: none; display: flex; align-items: center; gap: 8px; height: 29px; padding: 0 1px 3px 0; }
.panelhead h2 { flex: 1; padding-left: 18px; font-size: 12px; font-weight: bold; }
.headtool { display: flex; align-items: center; gap: 3px; }
.headtool svg { width: 20px; height: 20px; }
.headtool i { border: 4px solid transparent; border-top-color: #111; border-bottom: 0; }
.treebox { flex: 1; display: flex; min-height: 0; padding: 1px 0; border: 1px solid #70a0b1; border-radius: 4px; background: #fff; }
.tree { flex: 1; overflow: hidden; font-family: "Noto Sans", sans-serif; font-size: 11px; }
.tree li { position: relative; display: flex; align-items: center; gap: 4px; height: 18px; padding-left: 25px; white-space: nowrap; }
.tree li::before {
  content: "";
  position: absolute;
  left: 12px;
  top: 0;
  width: 11px;
  height: 18px;
  background:
    linear-gradient(#8b969c 50%, transparent 0) 0 0 / 1px 2px repeat-y,
    linear-gradient(90deg, #8b969c 50%, transparent 0) 0 9px / 2px 1px repeat-x;
}
.tree svg { flex: none; width: 14px; height: 14px; }
.tree button {
  position: absolute;
  left: 8px;
  top: 5px;
  width: 9px;
  height: 9px;
  border: 1px solid #9fc0cf;
  border-radius: 2px;
  background:
    linear-gradient(#123, #123) center / 5px 1px no-repeat,
    linear-gradient(#123, #123) center / 1px 5px no-repeat,
    #dff0f7;
}
.scrollbar { width: 20px; display: flex; flex-direction: column; align-items: center; border-left: 1px solid #bccdd6; }
.up, .down { border: 4px solid transparent; }
.up { margin-top: 1px; border-bottom: 5px solid #6c9bb4; }
.down { margin-bottom: 1px; border-top: 5px solid #6c9bb4; }
.track { flex: 1; display: flex; flex-direction: column; padding: 86px 0 18px; }
.thumb { flex: 1; width: 12px; border: 1px solid #7ba5bd; border-radius: 6px; background: repeating-linear-gradient(#557b91 0 1px, transparent 1px 3px) center / 3px 7px no-repeat, linear-gradient(90deg, #fff, #b9d0df); }
.sashes { display: flex; flex-direction: column; align-items: flex-end; gap: 10px; padding-top: 153px; }
.sash { width: 9px; height: 93px; display: grid; place-items: center; border: 1px solid #b2c3cf; border-right: 0; border-radius: 4px 0 0 4px; }
.sash::before { content: ""; width: 3px; height: 3px; border: 1px solid #435c70; border-radius: 50%; }
.sash.dark { background: #bdcbd6; border-color: #818f9b; }

.viewport { flex: 1; min-width: 0; background: linear-gradient(#c5dbec, #587aab); }
.model { width: 100%; height: 100%; }
.features {
  flex: none;
  width: 69px;
  display: grid;
  grid-template: 14px 1fr / 28px 13px 28px;
  align-items: start;
}
.hgrip { height: 14px; padding: 5px 1px; }
.hgrip::before { content: ""; display: block; height: 4px; background: conic-gradient(#6286a8 25%, transparent 0) 0 0 / 2px 2px; }
.hgrip.top { grid-column: 1 / 4; }
.fcol { display: flex; flex-direction: column; }
.fcol .hgrip { width: 41px; }
.second .hgrip { width: 28px; }
.ftool { width: 28px; height: 28px; display: grid; place-items: center; }
.ftool svg { width: 20px; height: 20px; }
.flyout { margin: 124px 0 0 4px; border: 3px solid transparent; border-left: 4px solid #28313a; border-right: 0; width: 4px; }

.taskbar {
  display: flex;
  justify-content: space-between;
  height: 40px;
  background: linear-gradient(90deg, #797b7d, #94959a 12%, #96979f 36%, #8d9198 52%, #a0a2a7 67%, #8c8e94 80%, #77736f 86%, #6f6b69);
  border-top: 1px solid #717478;
}
.apps { display: flex; gap: 3px; padding-left: 17px; }
.app { width: 59px; height: 39px; display: grid; place-items: center; border: 1px solid #c6c7ca; box-shadow: 0 0 0 1px #707176; background: linear-gradient(#ffffff28, #ffffff10); }
.app.plain { border-color: transparent; box-shadow: none; background: none; }
.app.current { border-color: #fff; background: #ffffff70; }
.app svg { width: 32px; height: 32px; }
.tray { display: flex; align-items: center; padding-right: 25px; }
.tray button { width: 24px; height: 40px; display: grid; place-items: center; }
.tray svg { width: 18px; height: 18px; }
.clock { width: 61px; margin-left: 12px; text-align: center; color: #fff; font: 11px/17px "Noto Sans", sans-serif; white-space: nowrap; }
```
